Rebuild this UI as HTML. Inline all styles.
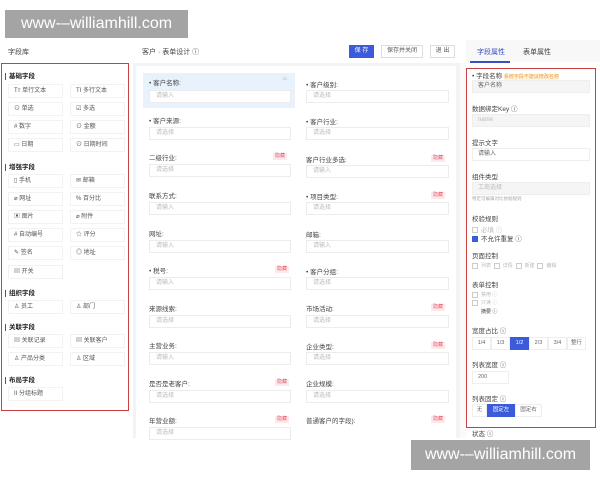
<!DOCTYPE html><html><head><meta charset="utf-8"><style>
*{margin:0;padding:0;box-sizing:border-box}
body{width:600px;height:480px;background:#fff;position:relative;overflow:hidden;font-family:"Liberation Sans","Noto Sans CJK SC",sans-serif;font-size:6px;color:#333}
.a{position:absolute;white-space:nowrap}
.wm{position:absolute;background:#a4a4a4;color:#fff;font-size:16px;display:flex;align-items:center;justify-content:center}
.it{position:absolute;width:55px;height:14px;border:1px solid #f2f2f2;background:#fff;font-size:6px;color:#555;padding-left:5px;line-height:12px}
.sec{position:absolute;left:5px;font-size:6.5px;font-weight:bold;color:#222;border-left:1.5px solid #3b4fc4;padding-left:3px;line-height:7px}
.lb{position:absolute;font-size:6.5px;color:#444}
.in{position:absolute;height:13px;border:1px solid #ececec;background:#fff;font-size:6px;color:#bbb;padding-left:6px;line-height:11px}
.tag{position:absolute;font-size:5px;color:#e05a6a;background:#fde8ea;padding:0 2px;line-height:7px}
.btn{position:absolute;height:13px;border:1px solid #ddd;font-size:6px;line-height:11px;text-align:center;color:#555;background:#fff}
.r{position:absolute;left:472px;font-size:6.5px;color:#444}
.ri{position:absolute;left:472px;width:118px;height:13px;border:1px solid #eee;background:#f5f5f5;font-size:6px;color:#666;padding-left:5px;line-height:11px}
.cb{display:inline-block;width:6px;height:6px;border:1px solid #ccc;vertical-align:middle;margin-right:3px}
</style></head><body>
<div class="wm" style="left:5px;top:10px;width:183px;height:28px">www-–williamhill.com</div>
<div class="a" style="left:8px;top:47px;font-size:7px;color:#444">字段库</div>
<div class="a" style="left:142px;top:47px;font-size:7px;color:#444">客户 · 表单设计 ⓘ</div>
<div class="btn" style="left:349px;top:45px;width:25px;background:#3b5bdb;border-color:#3b5bdb;color:#fff">保 存</div>
<div class="btn" style="left:381px;top:45px;width:42px">保存并关闭</div>
<div class="btn" style="left:430px;top:45px;width:25px">退 出</div>
<div class="a" style="left:466px;top:40px;width:134px;height:22px;background:#f8f8f8"></div>
<div class="a" style="left:477px;top:47px;font-size:7px;color:#3b4fc4">字段属性</div>
<div class="a" style="left:470px;top:61px;width:40px;height:1.5px;background:#3b4fc4"></div>
<div class="a" style="left:523px;top:47px;font-size:7px;color:#444">表单属性</div>

<div class="a" style="left:1px;top:63px;width:128px;height:348px;border:1.5px solid #c94040"></div>
<div class="sec" style="top:73px">基础字段</div>
<div class="it" style="left:8px;top:84px">Tт 单行文本</div><div class="it" style="left:70px;top:84px">TI 多行文本</div>
<div class="it" style="left:8px;top:102px">⊙ 单选</div><div class="it" style="left:70px;top:102px">☑ 多选</div>
<div class="it" style="left:8px;top:120px"># 数字</div><div class="it" style="left:70px;top:120px">⊙ 金额</div>
<div class="it" style="left:8px;top:138px">▭ 日期</div><div class="it" style="left:70px;top:138px">⊙ 日期时间</div>
<div class="sec" style="top:164px">增强字段</div>
<div class="it" style="left:8px;top:174px">▯ 手机</div><div class="it" style="left:70px;top:174px">✉ 邮箱</div>
<div class="it" style="left:8px;top:192px">⌀ 网址</div><div class="it" style="left:70px;top:192px">% 百分比</div>
<div class="it" style="left:8px;top:210px">▣ 图片</div><div class="it" style="left:70px;top:210px">⌀ 附件</div>
<div class="it" style="left:8px;top:228px"># 自动编号</div><div class="it" style="left:70px;top:228px">☆ 评分</div>
<div class="it" style="left:8px;top:246px">✎ 签名</div><div class="it" style="left:70px;top:246px">◎ 地址</div>
<div class="it" style="left:8px;top:265px">▤ 开关</div>
<div class="sec" style="top:290px">组织字段</div>
<div class="it" style="left:8px;top:300px">♙ 员工</div><div class="it" style="left:70px;top:300px">♙ 部门</div>
<div class="sec" style="top:324px">关联字段</div>
<div class="it" style="left:8px;top:334px">▤ 关联记录</div><div class="it" style="left:70px;top:334px">▤ 关联客户</div>
<div class="it" style="left:8px;top:352px">♙ 产品分类</div><div class="it" style="left:70px;top:352px">♙ 区域</div>
<div class="sec" style="top:377px">布局字段</div>
<div class="it" style="left:8px;top:387px">II 分组标题</div>

<div class="a" style="left:133px;top:63px;width:328px;height:375px;background:#f2f3f5"></div>
<div class="a" style="left:136px;top:66px;width:320px;height:372px;background:#fff"></div>
<div class="a" style="left:143px;top:73px;width:152px;height:35px;background:#e8f2fc"></div>
<div class="a" style="left:460px;top:63px;width:6px;height:375px;background:#fafafa"></div>

<div class="lb" style="left:149px;top:77px">• 客户名称:</div><div class="a" style="left:283px;top:76px;color:#999">⌂</div>
<div class="in" style="left:149px;top:90px;width:142px">请输入</div>
<div class="lb" style="left:149px;top:115px">• 客户来源:</div><div class="in" style="left:149px;top:127px;width:142px">请选择</div>
<div class="lb" style="left:149px;top:152px">二级行业:</div><div class="tag" style="left:273px;top:153px">隐藏</div><div class="in" style="left:149px;top:164px;width:142px">请选择</div>
<div class="lb" style="left:149px;top:190px">联系方式:</div><div class="in" style="left:149px;top:202px;width:142px">请输入</div>
<div class="lb" style="left:149px;top:228px">网址:</div><div class="in" style="left:149px;top:240px;width:142px">请输入</div>
<div class="lb" style="left:149px;top:265px">• 税号:</div><div class="tag" style="left:275px;top:266px">隐藏</div><div class="in" style="left:149px;top:277px;width:142px">请输入</div>
<div class="lb" style="left:149px;top:303px">来源线索:</div><div class="in" style="left:149px;top:315px;width:142px">请选择</div>
<div class="lb" style="left:149px;top:340px">主营业务:</div><div class="in" style="left:149px;top:352px;width:142px">请输入</div>
<div class="lb" style="left:149px;top:378px">是否是老客户:</div><div class="tag" style="left:275px;top:379px">隐藏</div><div class="in" style="left:149px;top:390px;width:142px">请选择</div>
<div class="lb" style="left:149px;top:415px">年营业额:</div><div class="tag" style="left:275px;top:416px">隐藏</div><div class="in" style="left:149px;top:427px;width:142px">请选择</div>

<div class="lb" style="left:306px;top:79px">• 客户级别:</div><div class="in" style="left:306px;top:90px;width:143px">请选择</div>
<div class="lb" style="left:306px;top:116px">• 客户行业:</div><div class="in" style="left:306px;top:127px;width:143px">请选择</div>
<div class="lb" style="left:306px;top:154px">客户行业多选:</div><div class="tag" style="left:431px;top:155px">隐藏</div><div class="in" style="left:306px;top:165px;width:143px">请输入</div>
<div class="lb" style="left:306px;top:191px">• 项目类型:</div><div class="tag" style="left:431px;top:192px">隐藏</div><div class="in" style="left:306px;top:202px;width:143px">请选择</div>
<div class="lb" style="left:306px;top:229px">邮箱:</div><div class="in" style="left:306px;top:240px;width:143px">请输入</div>
<div class="lb" style="left:306px;top:266px">• 客户分组:</div><div class="in" style="left:306px;top:277px;width:143px">请选择</div>
<div class="lb" style="left:306px;top:303px">市场活动:</div><div class="tag" style="left:431px;top:304px">隐藏</div><div class="in" style="left:306px;top:315px;width:143px">请选择</div>
<div class="lb" style="left:306px;top:341px">企业类型:</div><div class="tag" style="left:431px;top:342px">隐藏</div><div class="in" style="left:306px;top:352px;width:143px">请选择</div>
<div class="lb" style="left:306px;top:378px">企业规模:</div><div class="in" style="left:306px;top:390px;width:143px">请选择</div>
<div class="lb" style="left:306px;top:415px">普通客户的字段):</div><div class="tag" style="left:431px;top:416px">隐藏</div>

<div class="a" style="left:466px;top:68px;width:130px;height:360px;border:1.5px solid #c94040"></div>
<div class="r" style="top:70px">• 字段名称 <span style="font-size:5px;color:#e8a040;background:#fdf3e0">系统字段不建议修改名称</span></div>
<div class="ri" style="top:80px">客户名称</div>
<div class="r" style="top:103px">数据绑定Key ⓘ</div>
<div class="ri" style="top:114px;color:#bbb">name</div>
<div class="r" style="top:137px">提示文字</div>
<div class="ri" style="top:148px;background:#fff">请输入</div>
<div class="r" style="top:171px">组件类型</div>
<div class="ri" style="top:182px;color:#bbb">工商选择</div>
<div class="r" style="top:196px;font-size:4.5px;color:#aaa">特定可编辑对比依据规则</div>
<div class="r" style="top:213px">校验规则</div>
<div class="r" style="top:224px;color:#bbb"><span class="cb"></span>必填 ⓘ</div>
<div class="r" style="top:233px"><span class="cb" style="background:#3b5bdb;border-color:#3b5bdb"></span>不允许重复 ⓘ</div>
<div class="r" style="top:250px">页面控制</div>
<div class="r" style="top:262px;color:#bbb;font-size:5px"><span class="cb"></span>列表 &nbsp;<span class="cb"></span>详情 &nbsp;<span class="cb"></span>新建 &nbsp;<span class="cb"></span>编辑</div>
<div class="r" style="top:279px">表单控制</div>
<div class="r" style="top:291px;color:#bbb;font-size:5px"><span class="cb"></span>禁用 ⓘ</div>
<div class="r" style="top:299px;color:#bbb;font-size:5px"><span class="cb"></span>只读 ⓘ</div>
<div class="r" style="top:308px;font-size:5px"><span class="cb" style="border-color:#fff"></span>摘要 ⓘ</div>
<div class="r" style="top:325px">宽度占比 ⓘ</div>
<div class="a" style="left:472px;top:337px;display:flex;font-size:5.5px;color:#666">
<div style="width:19px;height:13px;border:1px solid #eee;text-align:center;line-height:11px">1/4</div><div style="width:19px;height:13px;border:1px solid #eee;text-align:center;line-height:11px">1/3</div><div style="width:19px;height:13px;background:#3b5bdb;color:#fff;text-align:center;line-height:13px">1/2</div><div style="width:19px;height:13px;border:1px solid #eee;text-align:center;line-height:11px">2/3</div><div style="width:19px;height:13px;border:1px solid #eee;text-align:center;line-height:11px">3/4</div><div style="width:19px;height:13px;border:1px solid #eee;text-align:center;line-height:11px">整行</div></div>
<div class="r" style="top:359px">列表宽度 ⓘ</div>
<div class="a" style="left:472px;top:371px;width:37px;height:13px;border:1px solid #eee;font-size:5.5px;color:#666;padding-left:5px;line-height:11px">200</div>
<div class="r" style="top:393px">列表固定 ⓘ</div>
<div class="a" style="left:472px;top:404px;display:flex;font-size:5.5px;color:#666">
<div style="width:15px;height:13px;border:1px solid #eee;text-align:center;line-height:11px">无</div><div style="width:28px;height:13px;background:#3b5bdb;color:#fff;text-align:center;line-height:13px">固定左</div><div style="width:27px;height:13px;border:1px solid #eee;text-align:center;line-height:11px">固定右</div></div>
<div class="r" style="top:428px">状态 ⓘ</div>
<div class="wm" style="left:411px;top:440px;width:179px;height:30px">www-–williamhill.com</div>
</body></html>
